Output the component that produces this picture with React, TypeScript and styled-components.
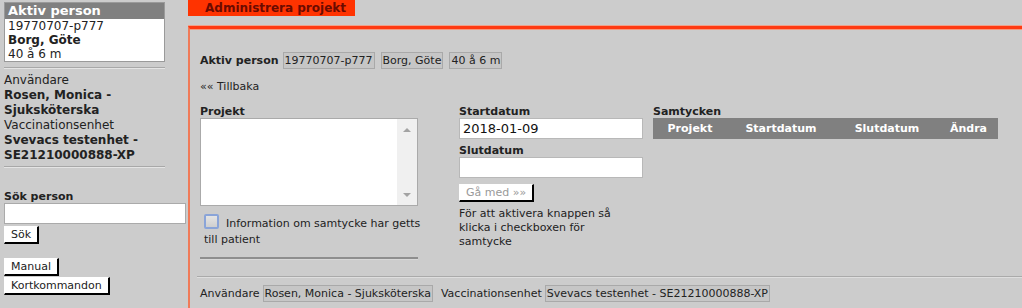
import React from "react";
import styled, { createGlobalStyle } from "styled-components";

const GlobalStyle = createGlobalStyle`
  html, body {
    margin: 0;
    padding: 0;
    background: #cccccc;
    font-family: "DejaVu Sans", Verdana, sans-serif;
    color: #222;
    overflow: hidden;
  }
`;

const App = () => {
  return (
    <>
      <GlobalStyle />
      <Page>
        <Sidebar>
          <PersonBox>
            <PersonHeader>Aktiv person</PersonHeader>
            <PersonLine>19770707-p777</PersonLine>
            <PersonLine bold>Borg, Göte</PersonLine>
            <PersonLine>40 å 6 m</PersonLine>
          </PersonBox>
          <SideRule />
          <UserInfo>
            <div>Användare</div>
            <strong>Rosen, Monica - Sjuksköterska</strong>
            <div>Vaccinationsenhet</div>
            <strong>Svevacs testenhet - SE21210000888-XP</strong>
          </UserInfo>
          <SideRule />
          <SearchLabel>Sök person</SearchLabel>
          <SearchInput />
          <OutsetButton>Sök</OutsetButton>
          <ButtonStack>
            <OutsetButton>Manual</OutsetButton>
            <OutsetButton>Kortkommandon</OutsetButton>
          </ButtonStack>
        </Sidebar>

        <Main>
          <Tab>Administrera projekt</Tab>
          <Panel>
            <PersonRow>
              <b>Aktiv person</b>
              <Tag>19770707-p777</Tag>
              <Tag>Borg, Göte</Tag>
              <Tag>40 å 6 m</Tag>
            </PersonRow>
            <BackLink>«« Tillbaka</BackLink>

            <Columns>
              <ProjectCol>
                <Label>Projekt</Label>
                <ListBox>
                  <Scrollbar>
                    <Arrow />
                    <Arrow down />
                  </Scrollbar>
                </ListBox>
                <ConsentRow>
                  <Checkbox />
                  Information om samtycke har getts
                  <br />
                  till patient
                </ConsentRow>
                <ColRule />
              </ProjectCol>

              <DateCol>
                <Label>Startdatum</Label>
                <DateInput defaultValue="2018-01-09" />
                <Label>Slutdatum</Label>
                <DateInput />
                <JoinButton disabled>Gå med »»</JoinButton>
                <Help>
                  För att aktivera knappen så klicka i checkboxen för samtycke
                </Help>
              </DateCol>

              <ConsentCol>
                <Label>Samtycken</Label>
                <TableHead>
                  <span>Projekt</span>
                  <span>Startdatum</span>
                  <span>Slutdatum</span>
                  <span>Ändra</span>
                </TableHead>
              </ConsentCol>
            </Columns>

            <Footer>
              <span>Användare</span>
              <Tag>Rosen, Monica - Sjuksköterska</Tag>
              <span>Vaccinationsenhet</span>
              <Tag>Svevacs testenhet - SE21210000888-XP</Tag>
            </Footer>
          </Panel>
        </Main>
      </Page>
    </>
  );
};

export default App;

const Page = styled.div`
  display: flex;
  width: 1022px;
  height: 308px;
  overflow: hidden;
`;

const Sidebar = styled.div`
  width: 184px;
  padding: 2px 0 0 4px;
  display: flex;
  flex-direction: column;
  align-items: flex-start;
  font-size: 12px;
`;

const PersonBox = styled.div`
  width: 159px;
  background: #fff;
  border: 1px solid #9a9a9a;
`;

const PersonHeader = styled.div`
  background: #808080;
  color: #fff;
  font-weight: bold;
  font-size: 13px;
  height: 16px;
  line-height: 16px;
  padding-left: 3px;
`;

const PersonLine = styled.div<{ bold?: boolean }>`
  font-size: 12px;
  line-height: 14px;
  padding-left: 3px;
  font-weight: ${(p) => (p.bold ? "bold" : "normal")};
`;

const SideRule = styled.div`
  width: 161px;
  height: 0;
  border-top: 1px solid #a8a8a8;
  border-bottom: 1px solid #e4e4e4;
  margin: 5px 0 4px;
`;

const UserInfo = styled.div`
  width: 150px;
  line-height: 15px;
  margin-bottom: -2px;

  strong {
    display: block;
  }
`;

const SearchLabel = styled.div`
  font-weight: bold;
  font-size: 11px;
  margin-top: 18px;
  line-height: 13px;
`;

const SearchInput = styled.input`
  box-sizing: border-box;
  width: 182px;
  height: 21px;
  border: 1px solid #aaa;
  background: #fff;
  margin: 0 0 2px;
`;

const OutsetButton = styled.button`
  font-family: "DejaVu Sans", Verdana, sans-serif;
  font-size: 11px;
  height: 18px;
  line-height: 14px;
  padding: 0 6px;
  background: #fff;
  color: ${(p) => (p.disabled ? "#999" : "#222")};
  border: 1px solid #fff;
  border-right: 2px solid #000;
  border-bottom: 2px solid #000;
  border-radius: 0;
`;

const JoinButton = styled(OutsetButton)`
  margin-top: 1px;
`;

const ButtonStack = styled.div`
  display: flex;
  flex-direction: column;
  align-items: flex-start;
  gap: 1px;
  margin-top: 14px;
`;

const Main = styled.div`
  flex: 1;
  display: flex;
  flex-direction: column;
`;

const Tab = styled.div`
  width: 150px;
  height: 16px;
  line-height: 17px;
  padding-left: 17px;
  background: #ff3300;
  color: #6b0b00;
  font-weight: bold;
  font-size: 12px;
`;

const Panel = styled.div`
  flex: 1;
  min-height: 0;
  margin-top: 10px;
  border-top: 3px solid #ff3a12;
  border-left: 2px solid #f07a58;
  box-shadow: inset 0 1px 0 #f59a80, 0 -1px 0 #f2a08a;
  padding: 0 0 0 10px;
  font-size: 11px;
  display: flex;
  flex-direction: column;
`;

const PersonRow = styled.div`
  display: flex;
  align-items: center;
  gap: 6px;
  margin-top: 23px;
  height: 17px;

  b {
    margin-right: -2px;
  }
`;

const Tag = styled.span`
  display: inline-block;
  background: #c6c6c6;
  border: 1px solid #a9a9a9;
  padding: 0 1px;
  line-height: 15px;
`;

const BackLink = styled.div`
  margin-top: 11px;
  line-height: 14px;
`;

const Columns = styled.div`
  display: flex;
  margin-top: 11px;
`;

const ProjectCol = styled.div`
  width: 218px;
  margin-right: 41px;
`;

const Label = styled.div`
  font-weight: bold;
  line-height: 13px;
`;

const ListBox = styled.div`
  box-sizing: border-box;
  height: 88px;
  background: #fff;
  border: 1px solid #aaa;
  display: flex;
  justify-content: flex-end;
`;

const Scrollbar = styled.div`
  width: 20px;
  background: #f0f0f0;
  display: flex;
  flex-direction: column;
  justify-content: space-between;
  align-items: center;
  padding: 9px 0 8px;
`;

const Arrow = styled.div<{ down?: boolean }>`
  width: 0;
  height: 0;
  border-left: 4px solid transparent;
  border-right: 4px solid transparent;
  ${(p) =>
    p.down ? "border-top: 4px solid #a3a3a3;" : "border-bottom: 4px solid #a3a3a3;"}
`;

const ConsentRow = styled.div`
  width: 240px;
  margin-top: 8px;
  line-height: 16px;
  padding-left: 4px;
  white-space: nowrap;
`;

const Checkbox = styled.span`
  display: inline-block;
  box-sizing: border-box;
  width: 15px;
  height: 15px;
  border: 2px solid #8aa4d8;
  border-radius: 2px;
  background: linear-gradient(#e4e4e4, #cfcfcf);
  vertical-align: -2px;
  margin-right: 7px;
`;

const ColRule = styled.div`
  height: 2px;
  background: #8e8e8e;
  border-bottom: 1px solid #d8d8d8;
  margin-top: 9px;
`;

const DateCol = styled.div`
  width: 184px;
  margin-right: 10px;
  display: flex;
  flex-direction: column;
  align-items: flex-start;
`;

const DateInput = styled.input`
  box-sizing: border-box;
  width: 184px;
  height: 21px;
  border: 1px solid #b8b8b8;
  background: #fff;
  font-family: "DejaVu Sans", Verdana, sans-serif;
  font-size: 13px;
  padding: 0 3px;
  color: #111;
  margin-bottom: 5px;
`;

const Help = styled.div`
  margin-top: 5px;
  line-height: 14px;
  width: 170px;
`;

const ConsentCol = styled.div`
  width: 345px;
`;

const TableHead = styled.div`
  display: grid;
  grid-template-columns: 74px 108px 104px 59px;
  height: 21px;
  align-items: center;
  background: #808080;
  color: #fff;
  font-weight: bold;
  text-align: center;
`;

const Footer = styled.div`
  margin-top: auto;
  margin-left: -3px;
  padding: 8px 0 6px 3px;
  border-top: 1px solid #aaa;
  box-shadow: inset 0 1px 0 #dedede;
  display: flex;
  align-items: center;
  gap: 3px;

  span:nth-child(3) {
    margin-left: 5px;
  }
`;
